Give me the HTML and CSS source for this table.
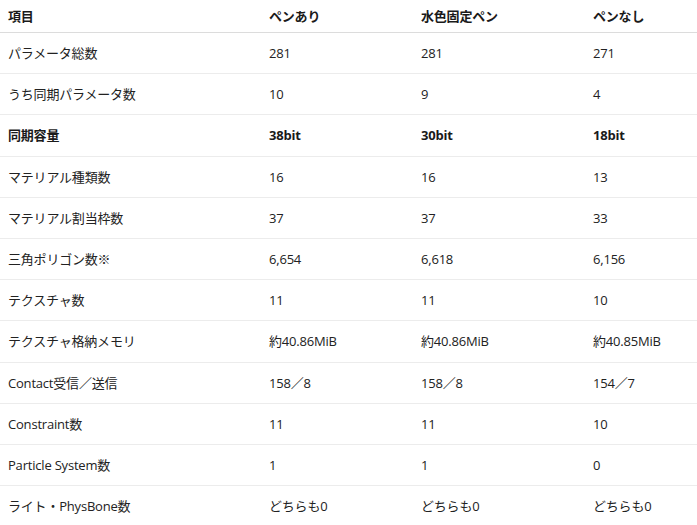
FILE: index.html
```html
<!DOCTYPE html>
<html lang="ja">
<head>
<meta charset="utf-8">
<link rel="stylesheet" href="styles.css">
</head>
<body>
<table class="spec">
  <colgroup>
    <col class="c1"><col class="c2"><col class="c3"><col class="c4">
  </colgroup>
  <thead>
    <tr><th>項目</th><th>ペンあり</th><th>水色固定ペン</th><th>ペンなし</th></tr>
  </thead>
  <tbody>
    <tr><td>パラメータ総数</td><td>281</td><td>281</td><td>271</td></tr>
    <tr><td>うち同期パラメータ数</td><td>10</td><td>9</td><td>4</td></tr>
    <tr class="strong"><td>同期容量</td><td>38bit</td><td>30bit</td><td>18bit</td></tr>
    <tr><td>マテリアル種類数</td><td>16</td><td>16</td><td>13</td></tr>
    <tr><td>マテリアル割当枠数</td><td>37</td><td>37</td><td>33</td></tr>
    <tr><td>三角ポリゴン数※</td><td>6,654</td><td>6,618</td><td>6,156</td></tr>
    <tr><td>テクスチャ数</td><td>11</td><td>11</td><td>10</td></tr>
    <tr><td>テクスチャ格納メモリ</td><td>約40.86MiB</td><td>約40.86MiB</td><td>約40.85MiB</td></tr>
    <tr><td>Contact受信／送信</td><td>158／8</td><td>158／8</td><td>154／7</td></tr>
    <tr><td>Constraint数</td><td>11</td><td>11</td><td>10</td></tr>
    <tr><td>Particle System数</td><td>1</td><td>1</td><td>0</td></tr>
    <tr><td>ライト・PhysBone数</td><td>どちらも0</td><td>どちらも0</td><td>どちらも0</td></tr>
  </tbody>
</table>
</body>
</html>
```

FILE: styles.css
```css
html, body {
  margin: 0;
  padding: 0;
  background: #ffffff;
}
body {
  font-family: "Open Sans", "Noto Sans CJK JP", sans-serif;
  font-size: 13px;
  color: #222222;
  letter-spacing: -0.2px;
}
.spec {
  width: 697px;
  border-collapse: collapse;
  table-layout: fixed;
}
.c1 { width: 261px; }
.c2 { width: 152px; }
.c3 { width: 172px; }
.c4 { width: 112px; }
.spec th {
  text-align: left;
  font-weight: 700;
  padding: 8px;
  line-height: 16px;
  border-bottom: 1px solid #dcdcdc;
  color: #1a1a1a;
}
.spec td {
  padding: 12px 8px;
  line-height: 16.2px;
  border-bottom: 1px solid #ececec;
  white-space: nowrap;
}
.spec .strong td {
  font-weight: 700;
  color: #1a1a1a;
}
```
